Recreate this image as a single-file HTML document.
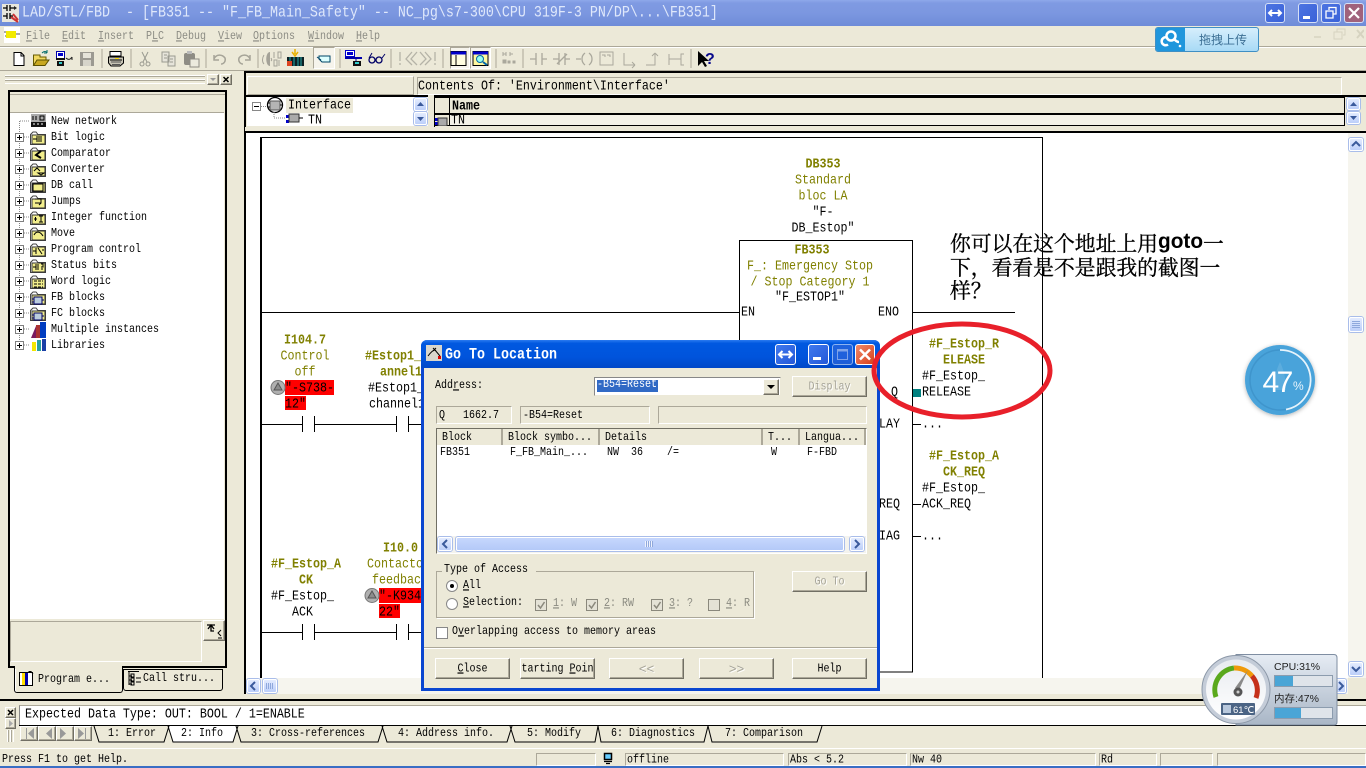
<!DOCTYPE html>
<html><head><meta charset="utf-8"><title>LAD/STL/FBD</title>
<style>
html,body{margin:0;padding:0}
body{width:1366px;height:768px;position:relative;overflow:hidden;background:#ece9d8;font-family:"Liberation Mono","Noto Sans CJK SC",monospace;color:#000}
div,span,svg{position:absolute;box-sizing:border-box}
u,b,i{position:static}
.t{white-space:pre;font-size:10px;line-height:12px;margin-top:2px;transform:scaleY(1.18)}
.m{white-space:pre;font-size:11.67px;line-height:14px;transform:scaleY(1.15)}
.c{text-align:center;white-space:pre;font-size:11.67px;line-height:14px;transform:scaleY(1.15)}
.o{color:#808000}
.bd{font-weight:bold}
.g{color:#8a8a80}
.mn{color:#8c8c84;white-space:pre;font-size:10px;line-height:12px;top:30px;margin-top:2px;transform:scaleY(1.18)}
.sb{background:linear-gradient(#e3ebfe,#bccffa);border:1px solid #fff;border-radius:2px;box-shadow:0 0 0 1px #a9bdea}
.sk{background:#ece9d8;border:1px solid;border-color:#aca899 #fff #fff #aca899}
.bt{background:#ece9d8;border:1px solid;border-color:#fff #716f64 #716f64 #fff;text-align:center;font-size:10px;line-height:21px;white-space:pre;box-shadow:inset -1px -1px 0 #aca899}
.bt.x{color:#a5a397;text-shadow:1px 1px 0 #fff}
.hd{background:#ece9d8;border-right:2px solid #aca899;top:0;height:16px;font-size:10px;line-height:20px;padding-left:5px;white-space:pre}
.xpb{border:1px solid #fff;border-radius:3px;background:linear-gradient(135deg,#3f79ee,#2458d8)}
.xpt{border:1px solid #d6e0f6;border-radius:3px;background:linear-gradient(135deg,#6b8ee8,#4a6fd9)}
.st{top:753px;height:13px;border:1px solid;border-color:#aca899 #fff #fff #aca899;font-size:10px;line-height:13px;white-space:pre;padding-left:1px}
.st i,.bt i,.hd i{display:inline-block;font-style:normal;transform:scaleY(1.18)}
.cn{white-space:pre;font-family:'Noto Serif CJK SC',serif;font-size:20.8px;line-height:24px;height:24px;-webkit-text-stroke:.35px #000;left:950px}
</style></head><body>

<!-- title bar -->
<div style="left:0;top:0;width:1366px;height:26px;background:linear-gradient(#8ea8ea 0,#7f9ae2 12%,#7c97e0 50%,#6f8cd8 100%)"></div>
<div class="t" style="left:22px;top:4px;font-size:13.33px;line-height:16px;color:#dfe8fb">LAD/STL/FBD  - [FB351 -- "F_FB_Main_Safety" -- NC_pg\s7-300\CPU 319F-3 PN/DP\...\FB351]</div>
<svg style="left:2px;top:3px" width="18" height="20" viewBox="0 0 18 20"><rect x="0" y="1" width="17" height="18" fill="#e9e7dc"/><path d="M1 5H5M5 2V8M8 2V8M8 5H12M1 13H5M5 10V16M8 10V16M8 13H11" stroke="#000" stroke-width="1.3" fill="none"/><path d="M9 14L16 19M11 11l5 6" stroke="#c33" stroke-width="2"/><path d="M12 3l3 2-3 2z" fill="#222"/></svg>
<div class="xpt" style="left:1265px;top:3px;width:20px;height:20px;background:linear-gradient(135deg,#4d74e2,#3a62d8)"></div>
<svg style="left:1265px;top:3px" width="20" height="20"><path d="M4 10H16M7 7L4 10L7 13M13 7L16 10L13 13" stroke="#fff" stroke-width="2" fill="none"/></svg>
<div class="xpt" style="left:1298px;top:3px;width:20px;height:20px;background:linear-gradient(135deg,#4d74e2,#3a62d8)"></div>
<div style="left:1303px;top:16px;width:7px;height:3px;background:#fff"></div>
<div class="xpt" style="left:1321px;top:3px;width:20px;height:20px;background:linear-gradient(135deg,#4d74e2,#3a62d8)"></div>
<svg style="left:1321px;top:3px" width="20" height="20"><path d="M8 7V4.5H15V11H12.500M5 8H12V15H5Z" stroke="#fff" stroke-width="1.300" fill="none"/></svg>
<div class="xpt" style="left:1344px;top:3px;width:20px;height:20px;background:#a0627c"></div>
<svg style="left:1344px;top:3px" width="20" height="20"><path d="M5 5L15 15M15 5L5 15" stroke="#fff" stroke-width="2.200"/></svg>

<!-- menu -->
<div style="left:4px;top:27px;width:16px;height:16px;background:#fff"></div>
<svg style="left:4px;top:27px" width="16" height="16"><rect x="2" y="4" width="10" height="7" fill="#f2ea00"/><path d="M0 5H2M12 7H16M1 9H2" stroke="#555"/></svg>
<div class="mn" style="left:26px"><u>F</u>ile</div>
<div class="mn" style="left:62px"><u>E</u>dit</div>
<div class="mn" style="left:98px"><u>I</u>nsert</div>
<div class="mn" style="left:146px">P<u>L</u>C</div>
<div class="mn" style="left:176px"><u>D</u>ebug</div>
<div class="mn" style="left:218px"><u>V</u>iew</div>
<div class="mn" style="left:253px"><u>O</u>ptions</div>
<div class="mn" style="left:308px"><u>W</u>indow</div>
<div class="mn" style="left:356px"><u>H</u>elp</div>
<div style="left:0;top:46px;width:1366px;height:2px;background:#aca899;border-bottom:1px solid #fff"></div>

<!-- baidu widget -->
<div style="left:1155px;top:27px;width:104px;height:25px;border:1px solid #3f8fc4;border-radius:3px;background:linear-gradient(#d6eefc,#a8daf6)"></div>
<div style="left:1156px;top:28px;width:29px;height:23px;background:#2096dc;border-radius:2px 0 0 2px"></div>
<svg style="left:1156px;top:28px" width="29" height="23"><circle cx="15" cy="8" r="4.500" fill="none" stroke="#fff" stroke-width="2.500"/><path d="M12 16.500A4 4 0 1 1 11 9.500M18 11C20 13 21 14 23 14" fill="none" stroke="#fff" stroke-width="2.500"/><circle cx="24" cy="18" r="1.300" fill="#fff"/></svg>
<div style="left:1199px;top:33px;font-size:12px;line-height:14px;color:#3c6f94;white-space:pre;font-family:'Noto Sans CJK SC',sans-serif">拖拽上传</div>
<svg style="left:1310px;top:27px" width="54" height="15"><path d="M4 10H11" stroke="#dcd9c6" stroke-width="2"/><path d="M27 5V2H35V8H33M24 5H32V12H24Z" stroke="#d6d3c0" fill="none"/><path d="M47 3L54 11M54 3L47 11" stroke="#d6d3c0" stroke-width="2"/></svg>

<!-- toolbar -->
<div style="left:0;top:70px;width:1366px;height:1px;background:#aca899"></div>
<div style="left:313px;top:47px;width:22px;height:22px;background:#f6f4ec;border:1px solid;border-color:#aca899 #fff #fff #aca899"></div>
<div style="left:450px;top:47px;width:20px;height:22px;background:#f6f4ec;border:1px solid;border-color:#aca899 #fff #fff #aca899"></div>
<div style="left:470px;top:47px;width:21px;height:22px;background:#f6f4ec;border:1px solid;border-color:#aca899 #fff #fff #aca899"></div>
<svg style="left:0;top:46px" width="720" height="26" viewBox="0 46 720 26">
<g stroke="#aca899"><path d="M102 49V68M131 49V68M206 49V68M258 49V68M340 49V68M391 49V68M443 49V68M496 49V68M523 49V68M691 49V68"/></g>
<path d="M14 52.500H21L24 55.500V65.500H14Z" fill="#fff" stroke="#000"/><path d="M21 53V56H24" fill="none" stroke="#000"/>
<path d="M33.500 65V55H40V57H46V60" fill="#f0d860" stroke="#665a00"/><path d="M33.500 65.500L37 60H49L45 65.500Z" fill="#c8a820" stroke="#5a5000"/><path d="M42 53C44 51 46 51 47 53M47 53V50M47 53H44" stroke="#006a6a" fill="none"/>
<rect x="56.500" y="51.500" width="8" height="7" fill="#fff" stroke="#00a"/><rect x="58" y="53" width="5" height="3" fill="#00c"/><path d="M56 59H65" stroke="#111" stroke-width="2"/><rect x="57" y="61" width="7" height="5" fill="#111"/><rect x="59" y="62" width="3" height="2" fill="#3cc"/><path d="M66 58C68 60 70 60 72 57M72 57V60" fill="none" stroke="#222"/>
<rect x="80" y="52" width="14" height="14" fill="#9c9a92"/><rect x="83" y="53" width="8" height="5" fill="#e6e4da"/><rect x="83" y="60" width="8" height="6" fill="#d6d4ca"/>
<path d="M110 51.500H121V56H110Z" fill="#fff" stroke="#000"/><path d="M108.500 57H123.500V63L120 66H111L108.500 63Z" fill="#c6c3b4" stroke="#000"/><path d="M110 60H122" stroke="#000"/><rect x="115" y="58" width="4" height="1" fill="#fd0"/><path d="M111 62H121M112 64.500H120" stroke="#555"/>
<g stroke="#9a9a90" fill="none"><path d="M142 52L147 62M148 52L143 62"/><circle cx="142" cy="64" r="2"/><circle cx="148" cy="64" r="2"/>
<path d="M162 52H169V62H162ZM168 56H175V66H168Z" fill="#e6e4da"/><path d="M164 55H167M164 58H167M170 59H173M170 62H173"/></g>
<rect x="184" y="53" width="11" height="12" rx="2" fill="#8e8c84"/><rect x="187" y="51" width="5" height="3" fill="#bbb"/><rect x="190" y="59" width="9" height="8" fill="#eceade" stroke="#8e8c84"/>
<path d="M214 59C216 54 222 54 225 58C226 61 224 64 221 64M214 55V60H219" fill="none" stroke="#a6a498" stroke-width="1.500"/>
<path d="M250 59C248 54 242 54 239 58C238 61 240 64 243 64M250 55V60H245" fill="none" stroke="#a6a498" stroke-width="1.500"/>
<path d="M270 52C265 52 265 66 270 66V52Z" fill="#a4a298"/><path d="M264 55C262 58 262 62 264 64M271 58C272 60 272 60 271 61" stroke="#a4a298" fill="none"/><path d="M274 52V58M278 52H281V58H278ZM274 60H277V66H274ZM279 60V66" stroke="#a4a298" fill="none"/>
<rect x="287" y="57" width="17" height="9" fill="#0d1f24"/><path d="M290 57V66M294 57V66M298 57V66M301 57V66" stroke="#2aa"/><path d="M295 49V54M292 52L295 56L298 52" stroke="#e8b000" stroke-width="1.500" fill="none"/><rect x="287" y="61" width="5" height="5" fill="#d42"/>
<path d="M319 56H330V62H322L319 59Z" fill="#dff" stroke="#046"/><path d="M317 57L321 60" stroke="#046"/>
<rect x="345.500" y="50.500" width="9" height="6" fill="#fff" stroke="#00c"/><rect x="347" y="52" width="6" height="3" fill="#00c"/><path d="M345 58H362" stroke="#00a" stroke-width="2"/><path d="M356 59V61" stroke="#00a"/><rect x="353" y="61" width="8" height="5" fill="#111"/><rect x="355" y="62" width="4" height="2" fill="#3cc"/>
<circle cx="372" cy="60" r="3" fill="none" stroke="#006" stroke-width="1.300"/><circle cx="379" cy="60" r="3" fill="none" stroke="#006" stroke-width="1.300"/><path d="M369 58L372 53M382 58L385 54" stroke="#006" fill="none"/>
<g stroke="#b5b3a7" fill="none" stroke-width="1.300"><path d="M400 52V61M400 63V65"/><path d="M412 52L406 59L412 65M417 52L411 59L417 65"/><path d="M420 52L426 59L420 65M425 52L431 59L425 65"/><path d="M435 52V61M435 63V65"/></g>
<rect x="451" y="51.500" width="15" height="14" fill="#fffde0" stroke="#000"/><rect x="451" y="51.500" width="15" height="3" fill="#00c"/><path d="M456 55V65" stroke="#000"/>
<rect x="473" y="51.500" width="15" height="14" fill="#fff8a0" stroke="#000"/><rect x="473" y="51.500" width="15" height="3" fill="#00c"/><circle cx="480" cy="59" r="3.500" fill="#9fe" stroke="#06a"/><path d="M483 62L487 65" stroke="#06a" stroke-width="2"/>
<g stroke="#aaa89c" fill="none"><path d="M503 52V56M506 52V56M510 52V56M503 54H506M510 54H513"/><rect x="503" y="60" width="3" height="3" fill="#aaa89c"/><rect x="508" y="61" width="2" height="2" fill="#aaa89c"/><rect x="513" y="61" width="2" height="2" fill="#aaa89c"/>
<g stroke-width="1.300"><path d="M530 59H536M536 53V65M542 53V65M542 59H547"/><path d="M553 59H559M559 53V65M565 53V65M565 59H570M557 64L567 54"/><path d="M576 59H581M585 53C581 56 581 62 585 65M589 53C593 56 593 62 589 65"/></g>
<rect x="600" y="52" width="13" height="13"/><path d="M602 55H605V57M607 55H610V57"/><path d="M624 53V65H635M635 65L632 62M635 65L632 68"/><path d="M646 65H655V54M655 53L652 56M655 53L658 56"/><path d="M669 54V65M669 59H681M684 54H681V65H684"/></g>
<path d="M698 51V66L702 62L705 67L707 66L704 61H709Z" fill="#000"/><text x="705" y="64" font-family="Liberation Sans" font-weight="bold" font-size="16" fill="#0a0a8c">?</text>
</svg>

<!-- left panel -->
<div style="left:5px;top:75px;width:200px;height:9px;background:repeating-linear-gradient(#fff 0 1px,#aca899 1px 2px,#ece9d8 2px 4px)"></div>
<div class="bt" style="left:207px;top:74px;width:12px;height:11px"></div>
<svg style="left:207px;top:74px" width="12" height="11"><path d="M3 4H9L6 7Z" fill="#999"/></svg>
<div class="bt" style="left:220px;top:74px;width:12px;height:11px"></div>
<svg style="left:220px;top:74px" width="12" height="11"><path d="M3.500 3L8.500 8M8.500 3L3.500 8" stroke="#000" stroke-width="1.500"/></svg>
<div style="left:8px;top:90px;width:219px;height:578px;border:2px solid #000;background:#ece9d8"></div>
<div style="left:10px;top:94px;width:215px;height:1px;background:#aca899"></div>
<div style="left:10px;top:112px;width:214px;height:1px;background:#aca899"></div>
<div style="left:10px;top:113px;width:214px;height:506px;background:#fff"></div>
<svg width="0" height="0"><defs><symbol id="fld" viewBox="0 0 16 14"><path d="M.5 3.500V13.500H15.500V3.500H8L6 1H3Z" fill="#fff" stroke="#444"/><rect x="2" y="4" width="13" height="9" fill="#f2ee8c" stroke="#333"/></symbol></defs></svg>
<svg style="left:10px;top:113px" width="60" height="240" viewBox="10 113 60 240">
<path d="M19.500 121V345M20 121H30M24 137H30M24 153H30M24 169H30M24 185H30M24 201H30M24 217H30M24 233H30M24 249H30M24 265H30M24 281H30M24 297H30M24 313H30M24 329H30M24 345H30" stroke="#888" stroke-dasharray="1 1" fill="none"/>
<rect x="31" y="114" width="15" height="8" fill="#aaa"/><rect x="31" y="122" width="15" height="5" fill="#111"/><path d="M33 116V120M36 116V120M40 116H44V120H40Z" stroke="#000" fill="none"/><path d="M33 124H44" stroke="#fff" stroke-dasharray="2 2"/>
<g id="pl">
<g fill="#fff" stroke="#808080"><rect x="15.500" y="133.500" width="8" height="8"/><rect x="15.500" y="149.500" width="8" height="8"/><rect x="15.500" y="165.500" width="8" height="8"/><rect x="15.500" y="181.500" width="8" height="8"/><rect x="15.500" y="197.500" width="8" height="8"/><rect x="15.500" y="213.500" width="8" height="8"/><rect x="15.500" y="229.500" width="8" height="8"/><rect x="15.500" y="245.500" width="8" height="8"/><rect x="15.500" y="261.500" width="8" height="8"/><rect x="15.500" y="277.500" width="8" height="8"/><rect x="15.500" y="293.500" width="8" height="8"/><rect x="15.500" y="309.500" width="8" height="8"/><rect x="15.500" y="325.500" width="8" height="8"/><rect x="15.500" y="341.500" width="8" height="8"/></g>
<path d="M17 137.500H22M19.500 135V140M17 153.500H22M19.500 151V156M17 169.500H22M19.500 167V172M17 185.500H22M19.500 183V188M17 201.500H22M19.500 199V204M17 217.500H22M19.500 215V220M17 233.500H22M19.500 231V236M17 249.500H22M19.500 247V252M17 265.500H22M19.500 263V268M17 281.500H22M19.500 279V284M17 297.500H22M19.500 295V300M17 313.500H22M19.500 311V316M17 329.500H22M19.500 327V332M17 345.500H22M19.500 343V348" stroke="#000"/>
</g>
<use href="#fld" x="30" y="131" width="16" height="14"/><use href="#fld" x="30" y="147" width="16" height="14"/><use href="#fld" x="30" y="163" width="16" height="14"/><use href="#fld" x="30" y="179" width="16" height="14"/><use href="#fld" x="30" y="195" width="16" height="14"/><use href="#fld" x="30" y="211" width="16" height="14"/><use href="#fld" x="30" y="227" width="16" height="14"/><use href="#fld" x="30" y="243" width="16" height="14"/><use href="#fld" x="30" y="259" width="16" height="14"/><use href="#fld" x="30" y="275" width="16" height="14"/><use href="#fld" x="30" y="291" width="16" height="14"/><use href="#fld" x="30" y="307" width="16" height="14"/>
<g stroke="#000" fill="none"><path d="M33 139H37M37 136V142M39 136V142M41 136V142"/><path d="M41 151L36 155L41 158" stroke-width="2"/><path d="M34 171L37 168L40 171M38 173H44L41 175Z"/><rect x="33" y="184" width="10" height="7"/><path d="M35 203H41V199H35M41 203L39 205"/><path d="M34 219H37M35.500 217V221M39 216H43M41 216V222M39 222H43"/><path d="M34 235C36 231 40 231 43 236"/><path d="M33 251H36M36 248V254M38 248L42 254M42 250H44"/><path d="M33 267H36M36 264V270M38 264V270M41 264H43V267H41M41 269H43"/><path d="M34 281H43M34 284H43M34 287H43" stroke-dasharray="3 1"/></g>
<rect x="34" y="297" width="8" height="7" fill="#bcd" stroke="#006"/><path d="M32 299H34M32 302H34M42 300H44" stroke="#006"/>
<rect x="34" y="313" width="8" height="7" fill="#bcd" stroke="#006"/><path d="M32 315H34M32 318H34M42 316H44" stroke="#006"/>
<path d="M31 338L36 326V338Z" fill="#7a1a60"/><rect x="36" y="325" width="4" height="13" fill="#a33"/><rect x="40" y="322" width="6" height="16" fill="#003cc0"/>
<rect x="32" y="342" width="4" height="9" fill="#f2e600"/><rect x="37" y="340" width="4" height="11" fill="#27a0a0"/><rect x="42" y="339" width="4" height="12" fill="#1a3fa6"/>
</svg>
<div class="t" style="left:51px;top:115px">New network</div>
<div class="t" style="left:51px;top:131px">Bit logic</div>
<div class="t" style="left:51px;top:147px">Comparator</div>
<div class="t" style="left:51px;top:163px">Converter</div>
<div class="t" style="left:51px;top:179px">DB call</div>
<div class="t" style="left:51px;top:195px">Jumps</div>
<div class="t" style="left:51px;top:211px">Integer function</div>
<div class="t" style="left:51px;top:227px">Move</div>
<div class="t" style="left:51px;top:243px">Program control</div>
<div class="t" style="left:51px;top:259px">Status bits</div>
<div class="t" style="left:51px;top:275px">Word logic</div>
<div class="t" style="left:51px;top:291px">FB blocks</div>
<div class="t" style="left:51px;top:307px">FC blocks</div>
<div class="t" style="left:51px;top:323px">Multiple instances</div>
<div class="t" style="left:51px;top:339px">Libraries</div>
<div class="sk" style="left:10px;top:621px;width:192px;height:41px"></div>
<div class="bt" style="left:203px;top:620px;width:22px;height:21px"></div>
<svg style="left:203px;top:620px" width="22" height="21"><path d="M4 5H12M8 5V11L11 11M5 9L8 5L11 9" stroke="#000" fill="none" stroke-width="1.300"/><path d="M18 10L15 13L18 16M15 18H19" stroke="#000" fill="none"/></svg>
<div style="left:14px;top:667px;width:109px;height:26px;background:#ece9d8;border:1px solid #000;border-top:0;border-radius:0 0 3px 3px;box-shadow:inset 1px 0 0 #fff"></div>
<div style="left:15px;top:666px;width:107px;height:3px;background:#ece9d8"></div>
<div style="left:123px;top:669px;width:100px;height:22px;border:1px solid #000;border-top:1px solid #000;border-radius:0 0 3px 3px;background:#ece9d8"></div>
<svg style="left:18px;top:670px" width="18" height="17"><rect x="1.500" y="2.500" width="13" height="13" fill="#fff" stroke="#000"/><rect x="4" y="3" width="3" height="12" fill="#fd0"/><rect x="7" y="3" width="3" height="12" fill="#00a"/><path d="M10.500 1.500H13L15 4" stroke="#000" fill="none"/></svg>
<svg style="left:126px;top:670px" width="16" height="17"><path d="M2 1.500H13M3 2V15M3 6H6M3 10H6M3 14H6" stroke="#000" fill="none"/><rect x="5" y="4" width="3" height="3" fill="none" stroke="#000"/><rect x="5" y="8" width="3" height="3" fill="none" stroke="#000"/><rect x="5" y="12" width="3" height="3" fill="none" stroke="#000"/><path d="M10 8H15M10 12H15" stroke="#000"/></svg>
<div class="t" style="left:38px;top:673px">Program e...</div>
<div class="t" style="left:143px;top:672px">Call stru...</div>

<!-- upper right pane -->
<div style="left:244px;top:71px;width:2px;height:629px;background:#000"></div>
<div style="left:244px;top:71px;width:1122px;height:2px;background:#000"></div>
<div class="sk" style="left:247px;top:76px;width:167px;height:19px;border-color:#fff #aca899 #aca899 #fff"></div>
<div class="sk" style="left:417px;top:77px;width:925px;height:18px"></div>
<div class="m" style="left:418px;top:79px">Contents Of: 'Environment\Interface'</div>
<div style="left:245px;top:95px;width:1121px;height:2px;background:#000"></div>
<div style="left:247px;top:97px;width:181px;height:29px;background:#fff"></div>
<div style="left:286px;top:98px;width:67px;height:15px;background:#ece9d8"></div>
<svg style="left:250px;top:96px" width="60" height="30"><rect x="2.500" y="6.500" width="8" height="8" fill="#fff" stroke="#888"/><path d="M4 10.500H9" stroke="#000"/><circle cx="25" cy="9" r="7.500" fill="#fff" stroke="#000" stroke-width="1.300"/><rect x="20" y="5" width="10" height="9" fill="#b4b4b4" stroke="#555"/><path d="M18 7H20M18 11H20M30 9H33" stroke="#000"/><path d="M11 10.500H17M24 16V22H35" stroke="#888" stroke-dasharray="1 1" fill="none"/><rect x="36" y="19" width="3" height="3" fill="#00c"/><rect x="36" y="24" width="3" height="3" fill="#00c"/><rect x="39" y="18" width="10" height="8" fill="#aaa" stroke="#333"/><path d="M49 22H53" stroke="#000"/></svg>
<div class="m" style="left:288px;top:98px">Interface</div>
<div class="t" style="left:308px;top:112px;height:12px;overflow:hidden;font-size:11.67px">TN</div>
<div class="sb" style="left:414px;top:98px;width:13px;height:13px"></div>
<svg style="left:414px;top:98px" width="13" height="13"><path d="M3 8L6.500 4L10 8Z" fill="#3a5a9c"/></svg>
<div class="sb" style="left:414px;top:112px;width:13px;height:13px"></div>
<svg style="left:414px;top:112px" width="13" height="13"><path d="M3 5L6.500 9L10 5Z" fill="#3a5a9c"/></svg>
<div style="left:428px;top:95px;width:6px;height:32px;background:#ece9d8"></div>
<div style="left:434px;top:97px;width:910px;height:1px;background:#000"></div>
<div style="left:434px;top:97px;width:1px;height:30px;background:#000"></div>
<div style="left:449px;top:97px;width:1px;height:28px;background:#000"></div>
<div style="left:435px;top:113px;width:909px;height:2px;background:#000"></div>
<div style="left:450px;top:115px;width:894px;height:10px;background:#f4f2e8"></div>
<div style="left:435px;top:125px;width:909px;height:1px;background:#000"></div>
<div class="m bd" style="left:452px;top:99px">Name</div>
<div class="m" style="left:451px;top:113px;height:12px;overflow:hidden">TN</div>
<svg style="left:435px;top:115px" width="15" height="11"><rect x="0" y="3" width="3" height="3" fill="#00c"/><rect x="0" y="7" width="3" height="3" fill="#00c"/><rect x="3" y="3" width="9" height="8" fill="#aaa" stroke="#333"/></svg>
<div style="left:1344px;top:97px;width:1px;height:29px;background:#000"></div>
<div class="sb" style="left:1347px;top:98px;width:13px;height:12px"></div>
<svg style="left:1347px;top:98px" width="13" height="12"><path d="M3 8L6.500 4L10 8Z" fill="#3a5a9c"/></svg>
<div class="sb" style="left:1347px;top:112px;width:13px;height:12px"></div>
<svg style="left:1347px;top:112px" width="13" height="12"><path d="M3 4L6.500 8L10 4Z" fill="#3a5a9c"/></svg>
<div style="left:245px;top:127px;width:1121px;height:4px;background:#ece9d8"></div>
<div style="left:245px;top:131px;width:1121px;height:2px;background:#000"></div>

<!-- editor -->
<div style="left:246px;top:133px;width:1102px;height:545px;background:#fff"></div>
<svg style="left:246px;top:133px" width="1102" height="545" viewBox="246 133 1102 545" fill="none" stroke="#000">
<path d="M261 137V678" stroke-width="2"/>
<path d="M261 137.500H1042.500V678"/>
<path d="M261 312.500H739M913 312.500H1015"/>
<path d="M739.500 240.500H912.500V672H739.500Z"/>
<path d="M261 424.500H302M302.500 416V432M314.500 416V432M315 424.500H396M396.500 416V432M408.500 416V432M409 424.500H422"/>
<path d="M261 632.500H302M302.500 624V640M314.500 624V640M315 632.500H396M396.500 624V640M408.500 624V640M409 632.500H422"/>
<path d="M913 424.500H921M913 504.500H921M913 536.500H921"/>
</svg>
<div style="left:913px;top:389px;width:8px;height:8px;background:#00807f"></div>
<div class="c o bd" style="left:773px;width:100px;top:157px">DB353</div>
<div class="c o" style="left:773px;width:100px;top:173px">Standard</div>
<div class="c o" style="left:773px;width:100px;top:189px">bloc LA</div>
<div class="c" style="left:773px;width:100px;top:205px">"F-</div>
<div class="c" style="left:773px;width:100px;top:221px">DB_Estop"</div>
<div class="c o bd" style="left:762px;width:100px;top:243px">FB353</div>
<div class="c o" style="left:740px;width:140px;top:259px">F_: Emergency Stop</div>
<div class="c o" style="left:740px;width:140px;top:275px">/ Stop Category 1</div>
<div class="c" style="left:740px;width:140px;top:290px">"F_ESTOP1"</div>
<div class="m" style="left:741px;top:305px">EN</div>
<div class="m" style="left:878px;top:305px">ENO</div>
<div class="m" style="left:891px;top:385px">Q</div>
<div class="m" style="left:879px;top:417px">LAY</div>
<div class="m" style="left:879px;top:497px">REQ</div>
<div class="m" style="left:879px;top:529px">IAG</div>
<div class="c o bd" style="left:914px;width:100px;top:337px">#F_Estop_R</div>
<div class="c o bd" style="left:914px;width:100px;top:353px">ELEASE</div>
<div class="m" style="left:922px;top:369px">#F_Estop_</div>
<div class="m" style="left:922px;top:385px">RELEASE</div>
<div class="m" style="left:922px;top:417px">...</div>
<div class="c o bd" style="left:914px;width:100px;top:449px">#F_Estop_A</div>
<div class="c o bd" style="left:914px;width:100px;top:465px">CK_REQ</div>
<div class="m" style="left:922px;top:481px">#F_Estop_</div>
<div class="m" style="left:922px;top:497px">ACK_REQ</div>
<div class="m" style="left:922px;top:529px">...</div>

<div class="c o bd" style="left:255px;width:100px;top:333px">I104.7</div>
<div class="c o" style="left:255px;width:100px;top:349px">Control</div>
<div class="c o" style="left:255px;width:100px;top:365px">off</div>
<div style="left:285px;top:380px;width:49px;height:15px;background:#f00"></div>
<div style="left:285px;top:396px;width:21px;height:14px;background:#f00"></div>
<div class="m" style="left:285px;top:381px">"-S738-</div>
<div class="m" style="left:285px;top:397px">12"</div>
<svg style="left:270px;top:379px" width="16" height="17"><circle cx="8" cy="8.500" r="7" fill="#b0b0b0" stroke="#777"/><path d="M8 4L12 11H4Z" fill="#8c8c8c" stroke="#555"/></svg>
<div class="m o bd" style="left:365px;top:349px">#Estop1_</div>
<div class="m o bd" style="left:380px;top:365px">annel1</div>
<div class="m" style="left:368px;top:381px">#Estop1_</div>
<div class="m" style="left:369px;top:397px">channel1</div>
<div class="m o bd" style="left:271px;top:557px">#F_Estop_A</div>
<div class="m o bd" style="left:299px;top:573px">CK</div>
<div class="m" style="left:271px;top:589px">#F_Estop_</div>
<div class="m" style="left:292px;top:605px">ACK</div>
<div class="m o bd" style="left:383px;top:541px">I10.0</div>
<div class="m o" style="left:367px;top:557px">Contacto</div>
<div class="m o" style="left:372px;top:573px">feedbac</div>
<div style="left:379px;top:588px;width:43px;height:15px;background:#f00"></div>
<div style="left:379px;top:604px;width:21px;height:14px;background:#f00"></div>
<div class="m" style="left:379px;top:589px">"-K934</div>
<div class="m" style="left:379px;top:605px">22"</div>
<svg style="left:364px;top:587px" width="16" height="17"><circle cx="8" cy="8.500" r="7" fill="#b0b0b0" stroke="#777"/><path d="M8 4L12 11H4Z" fill="#8c8c8c" stroke="#555"/></svg>

<!-- editor scrollbars -->
<div style="left:1348px;top:133px;width:18px;height:545px;background:#f6f5ee"></div>
<div class="sb" style="left:1349px;top:138px;width:14px;height:13px"></div>
<svg style="left:1349px;top:138px" width="14" height="13"><path d="M3 8L7 4L11 8" stroke="#3a5a9c" stroke-width="2" fill="none"/></svg>
<div class="sb" style="left:1349px;top:317px;width:14px;height:15px"></div>
<div style="left:1352px;top:321px;width:8px;height:7px;background:repeating-linear-gradient(#8fa8dc 0 1px,transparent 1px 2px)"></div>
<div class="sb" style="left:1349px;top:662px;width:14px;height:14px"></div>
<svg style="left:1349px;top:662px" width="14" height="14"><path d="M3 5L7 9L11 5" stroke="#3a5a9c" stroke-width="2" fill="none"/></svg>
<div style="left:246px;top:678px;width:1102px;height:16px;background:#f6f5ee"></div>
<div class="sb" style="left:247px;top:679px;width:13px;height:14px"></div>
<svg style="left:247px;top:679px" width="13" height="14"><path d="M8 3L4 7L8 11" stroke="#3a5a9c" stroke-width="2" fill="none"/></svg>
<div class="sb" style="left:263px;top:679px;width:14px;height:14px"></div>
<div style="left:266px;top:683px;width:8px;height:6px;background:repeating-linear-gradient(90deg,#8fa8dc 0 1px,transparent 1px 2px)"></div>
<div class="sb" style="left:1336px;top:679px;width:10px;height:14px"></div>
<svg style="left:1336px;top:679px" width="10" height="14"><path d="M3 3L7 7L3 11" stroke="#3a5a9c" stroke-width="2" fill="none"/></svg>

<!-- bottom panel -->
<div style="left:0;top:694px;width:1366px;height:5px;background:#ece9d8"></div>
<div style="left:0;top:699px;width:1366px;height:2px;background:#000"></div>
<div style="left:0;top:701px;width:1366px;height:42px;background:#ece9d8"></div>
<div style="left:19px;top:705px;width:1347px;height:20px;background:#fff;border-left:1px solid #888;border-top:1px solid #aca899"></div>
<div style="left:19px;top:725px;width:1347px;height:1px;background:#000"></div>
<div class="m" style="left:25px;top:707px">Expected Data Type: OUT: BOOL / 1=ENABLE</div>
<div class="bt" style="left:5px;top:707px;width:11px;height:11px"></div>
<svg style="left:5px;top:707px" width="11" height="11"><path d="M3 3L8 8M8 3L3 8" stroke="#000" stroke-width="1.500"/></svg>
<div class="bt" style="left:5px;top:718px;width:11px;height:11px"></div>
<svg style="left:5px;top:718px" width="11" height="11"><path d="M4 2L8 5.500L4 9Z" fill="#aaa"/></svg>
<div style="left:7px;top:730px;width:7px;height:12px;background:repeating-linear-gradient(90deg,#fff 0 1px,#aca899 1px 2px,#ece9d8 2px 3px)"></div>
<div class="bt" style="left:20px;top:726px;width:18px;height:15px"></div>
<div class="bt" style="left:38px;top:726px;width:18px;height:15px"></div>
<div class="bt" style="left:56px;top:726px;width:18px;height:15px"></div>
<div class="bt" style="left:74px;top:726px;width:18px;height:15px"></div>
<svg style="left:0;top:725px" width="840" height="20" viewBox="0 725 840 20">
<g fill="#999"><path d="M34 728V739L28 733.500ZM26 728H27V739H26Z"/><path d="M52 728V739L46 733.500Z"/><path d="M60 728V739L66 733.500Z"/><path d="M78 728V739L84 733.500ZM85 728H86V739H85Z"/></g>
<path d="M168 726L173 742H233L238 726Z" fill="#fff"/>
<g stroke="#000" fill="none"><path d="M94 726L99 742H164L169 726"/><path d="M168 726L173 742H233L238 726"/><path d="M236 726L241 742H378L383 726"/><path d="M382 726L387 742H507L512 726"/><path d="M510 726L515 742H595L598 726"/><path d="M598 726L601 742H704L708 726"/><path d="M708 726L712 742H817L822 726"/></g>
</svg>
<div class="t" style="left:108px;top:727px">1: Error</div>
<div class="t" style="left:181px;top:727px">2: Info</div>
<div class="t" style="left:251px;top:727px">3: Cross-references</div>
<div class="t" style="left:398px;top:727px">4: Address info.</div>
<div class="t" style="left:527px;top:727px">5: Modify</div>
<div class="t" style="left:611px;top:727px">6: Diagnostics</div>
<div class="t" style="left:725px;top:727px">7: Comparison</div>
<div style="left:0;top:748px;width:1366px;height:1px;background:#aca899;border-bottom:1px solid #fff"></div>

<!-- status bar -->
<div class="t" style="left:2px;top:753px">Press F1 to get Help.</div>
<div class="st" style="left:536px;width:60px"></div>
<svg style="left:602px;top:752px" width="12" height="13"><rect x="2.500" y="1.500" width="7" height="6" fill="#6cf" stroke="#000" stroke-width="1.500"/><path d="M2 9.500H10M4 11.500H8" stroke="#000" stroke-width="1.300"/></svg>
<div class="st" style="left:625px;width:159px"><i>offline</i></div>
<div class="st" style="left:788px;width:119px"><i>Abs &lt; 5.2</i></div>
<div class="st" style="left:910px;width:186px"><i>Nw 40</i></div>
<div class="st" style="left:1099px;width:58px"><i>Rd</i></div>
<div class="st" style="left:1160px;width:53px"></div>
<div class="st" style="left:1217px;width:149px"></div>
<div style="left:0;top:766px;width:1366px;height:2px;background:#3a6ec4"></div>

<!-- Go To Location dialog -->
<div style="left:421px;top:340px;width:459px;height:351px;background:#ece9d8;border:3px solid #0a46d0;border-top:0;border-radius:6px 6px 0 0"></div>
<div style="left:421px;top:340px;width:459px;height:28px;border-radius:6px 6px 0 0;background:linear-gradient(#2a7af0 0,#0058e0 12%,#0054dc 60%,#0048c8 100%)"></div>
<svg style="left:426px;top:345px" width="16" height="16"><rect width="16" height="16" fill="#d8d6cc"/><path d="M2 11C5 7 7 5 9 5L14 11" stroke="#000" fill="none"/><path d="M7 3L10 6M10 3L7 6" stroke="#000"/><rect x="12" y="11" width="3" height="3" fill="#d00"/></svg>
<div class="t bd" style="left:445px;top:347px;font-size:13.33px;line-height:14px;color:#fff">Go To Location</div>
<div class="xpb" style="left:775px;top:344px;width:21px;height:21px"></div>
<svg style="left:775px;top:344px" width="21" height="21"><path d="M4 10.500H17M7.500 7L4 10.500L7.500 14M13.500 7L17 10.500L13.500 14" stroke="#fff" stroke-width="2" fill="none"/></svg>
<div class="xpb" style="left:808px;top:344px;width:21px;height:21px"></div>
<div style="left:813px;top:357px;width:8px;height:3px;background:#fff"></div>
<div class="xpb" style="left:832px;top:344px;width:21px;height:21px;opacity:.55;background:#3a6cdc"></div>
<svg style="left:832px;top:344px;opacity:.6" width="21" height="21"><rect x="5.500" y="5.500" width="10" height="10" fill="none" stroke="#c0d0f4"/><path d="M5 6.500H16" stroke="#c0d0f4" stroke-width="2"/></svg>
<div class="xpb" style="left:855px;top:344px;width:20px;height:21px;background:linear-gradient(135deg,#f08a6a,#d8401c)"></div>
<svg style="left:855px;top:344px" width="20" height="21"><path d="M5 5.500L15 15.500M15 5.500L5 15.500" stroke="#fff" stroke-width="2.500"/></svg>

<div class="t" style="left:435px;top:379px">Add<u>r</u>ess:</div>
<div style="left:594px;top:377px;width:187px;height:19px;background:#fff;border:1px solid;border-color:#888 #ece9d8 #ece9d8 #888"></div>
<div style="left:597px;top:380px;width:61px;height:12px;background:#316ac5"></div>
<div class="t" style="left:597px;top:378px;color:#fff">-B54=Reset</div>
<div class="bt" style="left:763px;top:379px;width:16px;height:16px"></div>
<svg style="left:763px;top:379px" width="16" height="16"><path d="M4 6H12L8 10Z" fill="#000"/></svg>
<div class="bt x" style="left:792px;top:376px;width:75px;height:21px"><i>Display</i></div>

<div class="sk" style="left:436px;top:406px;width:76px;height:18px;padding-left:2px"><span class="t" style="left:2px;top:2px">Q   1662.7</span></div>
<div class="sk" style="left:520px;top:406px;width:130px;height:18px"><span class="t" style="left:2px;top:2px">-B54=Reset</span></div>
<div class="sk" style="left:658px;top:406px;width:209px;height:18px"></div>

<div style="left:436px;top:428px;width:431px;height:126px;background:#fff;border:1px solid;border-color:#716f64 #fff #fff #716f64"></div>
<div style="left:437px;top:429px;width:429px;height:16px;background:#ece9d8"></div>
<div class="hd" style="left:437px;top:429px;width:66px"><i>Block</i></div>
<div class="hd" style="left:503px;top:429px;width:97px"><i>Block symbo...</i></div>
<div class="hd" style="left:600px;top:429px;width:163px"><i>Details</i></div>
<div class="hd" style="left:763px;top:429px;width:37px"><i>T...</i></div>
<div class="hd" style="left:800px;top:429px;width:66px"><i>Langua...</i></div>
<div class="t" style="left:440px;top:446px">FB351</div>
<div class="t" style="left:510px;top:446px">F_FB_Main_...</div>
<div class="t" style="left:607px;top:446px">NW  36    /=</div>
<div class="t" style="left:771px;top:446px">W</div>
<div class="t" style="left:807px;top:446px">F-FBD</div>
<div style="left:437px;top:536px;width:429px;height:17px;background:#f4f3ee"></div>
<div class="sb" style="left:438px;top:537px;width:14px;height:14px"></div>
<svg style="left:438px;top:537px" width="14" height="14"><path d="M9 3L5 7L9 11" stroke="#3a5a9c" stroke-width="2" fill="none"/></svg>
<div class="sb" style="left:456px;top:537px;width:388px;height:14px;background:linear-gradient(#c6d7fd,#b4c9f8)"></div>
<div style="left:645px;top:541px;width:8px;height:6px;background:repeating-linear-gradient(90deg,#eef2fd 0 1px,#8fa8dc 1px 2px)"></div>
<div class="sb" style="left:850px;top:537px;width:14px;height:14px"></div>
<svg style="left:850px;top:537px" width="14" height="14"><path d="M5 3L9 7L5 11" stroke="#3a5a9c" stroke-width="2" fill="none"/></svg>

<div style="left:436px;top:571px;width:318px;height:47px;border:1px solid #aca899;box-shadow:1px 1px 0 #fff"></div>
<div class="t" style="left:442px;top:563px;background:#ece9d8;padding:0 2px 0 2px">Type of Access </div>
<svg style="left:445px;top:579px" width="15" height="32"><circle cx="7" cy="7" r="5.500" fill="#fff" stroke="#888"/><circle cx="7" cy="7" r="2" fill="#000"/><circle cx="7" cy="25" r="5.500" fill="#fff" stroke="#888"/></svg>
<div class="t" style="left:463px;top:579px"><u>A</u>ll</div>
<div class="t" style="left:463px;top:596px"><u>S</u>election:</div>
<svg style="left:535px;top:598px" width="220" height="14"><g fill="#e4e2d6" stroke="#8a887c"><rect x=".5" y="1.500" width="11" height="11"/><rect x="51.500" y="1.500" width="11" height="11"/><rect x="116.500" y="1.500" width="11" height="11"/><rect x="173.500" y="1.500" width="11" height="11"/></g><g stroke="#8a887c" stroke-width="1.500" fill="none"><path d="M3 7L5.500 10L9.500 4M54 7L56.500 10L60.500 4M119 7L121.500 10L125.500 4"/></g></svg>
<div class="t g" style="left:553px;top:597px"><u>1</u>: W</div>
<div class="t g" style="left:604px;top:597px"><u>2</u>: RW</div>
<div class="t g" style="left:669px;top:597px"><u>3</u>: ?</div>
<div class="t g" style="left:726px;top:597px"><u>4</u>: R</div>
<div class="bt x" style="left:792px;top:571px;width:75px;height:21px"><i>Go To</i></div>
<div style="left:436px;top:627px;width:12px;height:12px;background:#fff;border:1px solid #888"></div>
<div class="t" style="left:452px;top:625px">O<u>v</u>erlapping access to memory areas</div>
<div style="left:424px;top:647px;width:453px;height:2px;background:#aca899;border-bottom:1px solid #fff"></div>
<div class="bt" style="left:435px;top:658px;width:75px;height:21px"><i><u>C</u>lose</i></div>
<div class="bt" style="left:520px;top:658px;width:75px;height:21px;overflow:hidden"><i>tarting <u>P</u>oin</i></div>
<div class="bt x" style="left:609px;top:658px;width:75px;height:21px;font-size:13px">&lt;&lt;</div>
<div class="bt x" style="left:699px;top:658px;width:75px;height:21px;font-size:13px">&gt;&gt;</div>
<div class="bt" style="left:792px;top:658px;width:75px;height:21px"><i>Help</i></div>

<!-- overlays -->
<svg style="left:865px;top:315px" width="195" height="112"><ellipse cx="97" cy="55.500" rx="88" ry="46.500" fill="none" stroke="#e8202a" stroke-width="5"/></svg>
<div class="cn" style="top:230px">你可以在这个地址上用</div>
<div class="cn" style="top:230px;left:1158px;font-family:'Liberation Sans',sans-serif;font-weight:bold;-webkit-text-stroke:0">goto</div>
<div class="cn" style="top:230px;left:1203px">一</div>
<div class="cn" style="top:254px">下，看看是不是跟我的截图一</div>
<div class="cn" style="top:277px">样？</div>

<svg style="left:1240px;top:340px" width="80" height="84"><defs><filter id="sh" x="-20%" y="-20%" width="140%" height="140%"><feDropShadow dx="0" dy="1" stdDeviation="2" flood-color="#000" flood-opacity=".3"/></filter></defs><circle cx="40" cy="40" r="35" fill="#4aa3da" filter="url(#sh)"/><circle cx="40" cy="40" r="30" fill="none" stroke="#3f95cc" stroke-width="1.500"/><path d="M40 10A30 30 0 0 1 46 69.500" fill="none" stroke="#e6f4fc" stroke-width="1.800"/><path d="M40 22C36 30 34 40 34 50H46C46 40 44 30 40 22Z" fill="#5cadde"/><text x="22.500" y="52" font-family="Liberation Sans" font-size="30" letter-spacing="-2.500" fill="#fff">47</text><text x="53" y="50" font-family="Liberation Sans" font-size="12" fill="#e8f4fc">%</text></svg>

<svg style="left:1200px;top:652px" width="140" height="77"><defs><linearGradient id="pn" x1="0" y1="0" x2="0" y2="1"><stop offset="0" stop-color="#e6ecf4"/><stop offset="1" stop-color="#a9b6c6"/></linearGradient><linearGradient id="gb" x1="0" y1="0" x2="0" y2="1"><stop offset="0" stop-color="#e8ebf0"/><stop offset="1" stop-color="#fff"/></linearGradient></defs>
<path d="M36 2.500H134Q137 2.500 137 6V70Q137 73 134 73H36Z" fill="url(#pn)" stroke="#7f8ea2"/>
<circle cx="36" cy="37.500" r="34" fill="#c4ccd8" stroke="#8c98a8"/><circle cx="36" cy="37.500" r="30" fill="url(#gb)"/>
<path d="M16 45A22 22 0 0 1 34 16" fill="none" stroke="#5aa91c" stroke-width="5"/><path d="M34 16A22 22 0 0 1 52 24" fill="none" stroke="#f09a0a" stroke-width="5"/><path d="M52 24A22 22 0 0 1 56 46" fill="none" stroke="#c5301a" stroke-width="5"/>
<path d="M48 18L39 38L35 36Z" fill="#8a8a8a"/><circle cx="38" cy="40" r="4.500" fill="#555"/><circle cx="38" cy="40" r="1.500" fill="#ccc"/>
<rect x="21" y="51" width="34" height="12" rx="1" fill="#4b6484"/><rect x="23" y="53" width="8" height="8" fill="#b8c8dc"/><text x="33" y="61" font-family="Liberation Sans" font-size="9.500" fill="#fff">61℃</text>
<text x="74" y="18" font-family="Liberation Sans,Noto Sans CJK SC" font-size="10.500" fill="#222">CPU:31%</text>
<rect x="74.500" y="23.500" width="58" height="11" fill="#dfe4ea" stroke="#8c9cae"/><rect x="75" y="24" width="18" height="10" fill="#4aa5d6"/>
<text x="74" y="50" font-family="Liberation Sans,Noto Sans CJK SC" font-size="10.500" fill="#222">内存:47%</text>
<rect x="74.500" y="55.500" width="58" height="11" fill="#dfe4ea" stroke="#8c9cae"/><rect x="75" y="56" width="26" height="10" fill="#4aa5d6"/></svg>
</body></html>
